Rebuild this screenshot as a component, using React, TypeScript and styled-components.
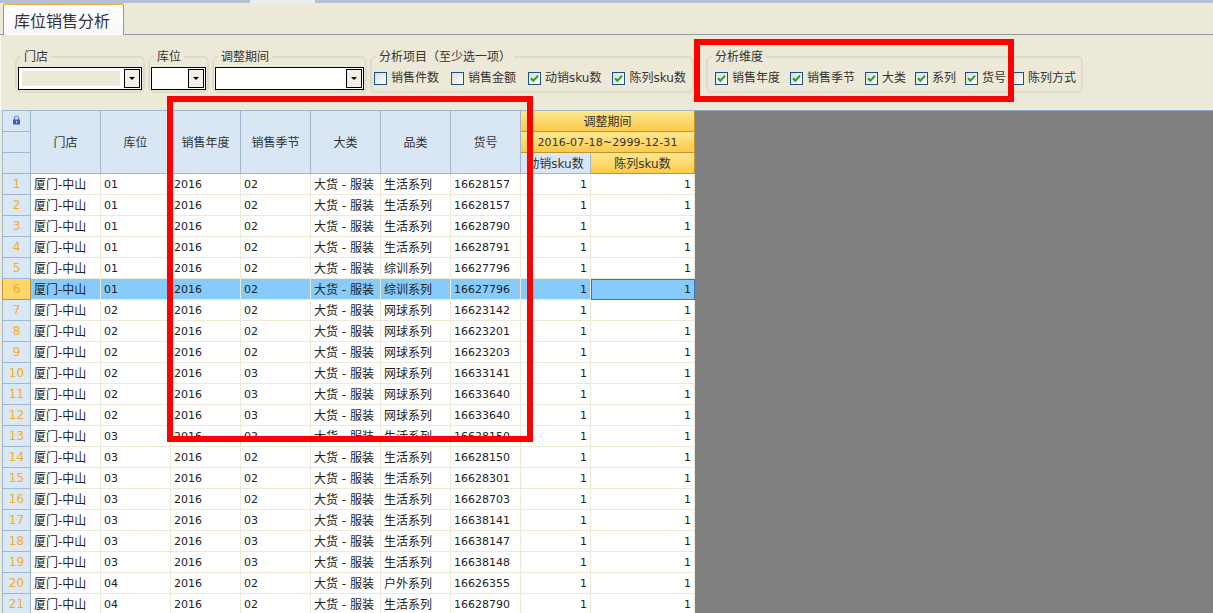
import { FC } from "react";
import styled, { createGlobalStyle } from "styled-components";

const GlobalStyle = createGlobalStyle`
  html, body {
    margin: 0;
    height: 100%;
    overflow: hidden;
    background: #ece9d8;
  }
  body {
    font-family: "DejaVu Sans", "Noto Sans CJK SC", sans-serif;
    font-size: 12px;
    color: #222;
  }
`;

const Page = styled.div`
  position: relative;
  width: 1213px;
  height: 613px;
  display: flex;
  flex-direction: column;
  overflow: hidden;
`;

const TopLine = styled.div`
  height: 3px;
  flex: none;
  background: linear-gradient(
    to right,
    #b4c0d4 250px,
    #e8eef0 250px,
    #e8eef0 315px,
    #b4c0d4 315px
  );
`;

const TabStrip = styled.div`
  height: 32px;
  flex: none;
  display: flex;
  align-items: flex-end;
  padding-left: 3px;
  border-bottom: 1px solid #919b9c;
  box-sizing: border-box;
`;

const Tab = styled.div`
  width: 121px;
  height: 32px;
  margin-bottom: -1px;
  box-sizing: border-box;
  display: flex;
  align-items: center;
  padding: 0 0 1px 10px;
  font-size: 16px;
  color: #333;
  background: linear-gradient(#ffffff, #f8f8fc);
  border: 1px solid #919b9c;
  border-bottom: none;
  border-top: 2px solid #f5b342;
  border-radius: 3px 3px 0 0;
`;

const Toolbar = styled.div`
  height: 75px;
  flex: none;
  box-sizing: border-box;
  display: flex;
  align-items: flex-start;
  gap: 3px;
  padding: 15px 0 0 14px;
  border-left: 1px solid #f8f8f4;
`;

const Group = styled.fieldset<{ $width: number; $shift?: number }>`
  width: ${(p) => p.$width}px;
  height: 43px;
  margin: 0 0 0 ${(p) => p.$shift ?? 0}px;
  min-width: 0;
  box-sizing: border-box;
  padding: 0;
  border: 2px solid #dddbc9;
  border-radius: 6px;
`;

const Legend = styled.legend`
  margin-left: 4px;
  padding: 0 3px;
  font-size: 12px;
  line-height: 14px;
  color: #333;
  text-spacing-trim: space-all;
`;

const Combo = styled.div`
  margin: 3px 1px 0;
  height: 23px;
  box-sizing: border-box;
  display: flex;
  justify-content: space-between;
  padding: 1px 1px 1px 3px;
  background: #fff;
  border: 1px solid #000;
`;

const ComboValue = styled.div<{ $fill?: boolean }>`
  flex: 1;
  margin: 2px 4px 2px 0;
  background: ${(p) => (p.$fill ? "#ece9d8" : "#fff")};
`;

const ComboButton = styled.div`
  width: 16px;
  flex: none;
  box-sizing: border-box;
  border: 1px solid #000;
  background: #f2f0e6;
  display: flex;
  align-items: center;
  justify-content: center;

  &::after {
    content: "";
    border-left: 3px solid transparent;
    border-right: 3px solid transparent;
    border-top: 3px solid #000;
  }
`;

const CheckRow = styled.div<{ $inset: number }>`
  display: flex;
  align-items: center;
  margin: 7px 0 0 ${(p) => p.$inset}px;
  height: 15px;
`;

const CheckItem = styled.div<{ $after: number }>`
  display: flex;
  align-items: center;
  gap: 4px;
  margin-right: ${(p) => p.$after}px;
  white-space: nowrap;
  line-height: 15px;
  color: #333;
`;

const Box = styled.span`
  width: 13px;
  height: 13px;
  flex: none;
  box-sizing: border-box;
  border: 1px solid #1c5180;
  background: linear-gradient(135deg, #dcdcd7, #ffffff);
  display: flex;
  align-items: center;
  justify-content: center;
`;

const GridArea = styled.div`
  flex: 1;
  display: flex;
  padding-left: 2px;
  min-height: 0;
  background: #ece9d8;
`;

const Table = styled.div`
  width: 693px;
  flex: none;
  display: flex;
  flex-direction: column;
`;

const Empty = styled.div`
  flex: 1;
  background: #808080;
  border-top: 1px solid #8fa8c8;
`;

const COLUMNS = "29px repeat(8, 70px) 104px";

const Header = styled.div`
  display: grid;
  grid-template-columns: ${COLUMNS};
  grid-template-rows: repeat(3, 21px);
  border-top: 1px solid #9eb6ce;
  flex: none;
`;

const HeadCell = styled.div<{ $col?: string; $row?: string; $warm?: boolean }>`
  grid-column: ${(p) => p.$col ?? "auto"};
  grid-row: ${(p) => p.$row ?? "auto"};
  box-sizing: border-box;
  display: flex;
  align-items: center;
  justify-content: center;
  padding-bottom: 2px;
  white-space: nowrap;
  overflow: hidden;
  color: #333;
  border-right: 1px solid ${(p) => (p.$warm ? "#c8922a" : "#9eb6ce")};
  border-bottom: 1px solid ${(p) => (p.$warm ? "#c8922a" : "#9eb6ce")};
  background: ${(p) =>
    p.$warm ? "linear-gradient(#fee88f, #fdc94c)" : "#d9e6f4"};
`;

const CornerCell = styled(HeadCell)`
  border-left: 1px solid #9eb6ce;
`;

const DateText = styled.span`
  font-size: 11px;
  letter-spacing: 0.15px;
  margin-top: 2px;
`;

const Row = styled.div`
  display: grid;
  grid-template-columns: ${COLUMNS};
  height: 21px;
  flex: none;
`;

const RowNumber = styled.div<{ $selected?: boolean }>`
  box-sizing: border-box;
  display: flex;
  align-items: center;
  justify-content: center;
  font-size: 12px;
  color: #f9ab22;
  background: ${(p) => (p.$selected ? "#fdd76b" : "#dae7f5")};
  border: 1px solid ${(p) => (p.$selected ? "#c8922a" : "#9eb6ce")};
  border-top: none;
`;

const Cell = styled.div<{ $selected?: boolean; $num?: boolean; $end?: boolean }>`
  box-sizing: border-box;
  display: flex;
  align-items: center;
  justify-content: ${(p) => (p.$end ? "flex-end" : "flex-start")};
  padding: 0 3px ${(p) => (p.$num ? 0 : 2)}px;
  white-space: nowrap;
  overflow: hidden;
  font-size: ${(p) => (p.$num ? "11px" : "12px")};
  color: #222;
  background: ${(p) => (p.$selected ? "#87cbfa" : "#fff")};
  border-right: 1px solid #efe9d8;
  border-bottom: 1px solid #efe9d8;
`;

const ActiveCell = styled(Cell)`
  border: 1px solid #3a70c0;
`;

const Highlight = styled.div<{ $x: number; $y: number; $w: number; $h: number }>`
  position: absolute;
  left: ${(p) => p.$x}px;
  top: ${(p) => p.$y}px;
  width: ${(p) => p.$w}px;
  height: ${(p) => p.$h}px;
  box-sizing: border-box;
  border: 6px solid #ff0000;
  pointer-events: none;
`;

const Check: FC<{ label: string; checked?: boolean; after: number }> = ({
  label,
  checked,
  after,
}) => (
  <CheckItem $after={after}>
    <Box>
      {checked && (
        <svg width="9" height="9" viewBox="0 0 9 9">
          <path d="M1 4.2 L3.4 6.8 L8 1.6" fill="none" stroke="#21a121" strokeWidth="2" />
        </svg>
      )}
    </Box>
    {label}
  </CheckItem>
);

const LockIcon = () => (
  <svg width="9" height="10" viewBox="0 0 9 10">
    <path d="M2.5 5V3a2 2 0 0 1 4 0v2" fill="none" stroke="#6f86c8" strokeWidth="1.2" />
    <rect x="1" y="4.5" width="7" height="5" fill="#3b5fc4" />
    <rect x="4" y="6" width="1" height="2" fill="#cfdcf5" />
  </svg>
);

const rows: [string, string, string, string][] = [
  ["01", "02", "生活系列", "16628157"],
  ["01", "02", "生活系列", "16628157"],
  ["01", "02", "生活系列", "16628790"],
  ["01", "02", "生活系列", "16628791"],
  ["01", "02", "综训系列", "16627796"],
  ["01", "02", "综训系列", "16627796"],
  ["02", "02", "网球系列", "16623142"],
  ["02", "02", "网球系列", "16623201"],
  ["02", "02", "网球系列", "16623203"],
  ["02", "03", "网球系列", "16633141"],
  ["02", "03", "网球系列", "16633640"],
  ["02", "03", "网球系列", "16633640"],
  ["03", "02", "生活系列", "16628150"],
  ["03", "02", "生活系列", "16628150"],
  ["03", "02", "生活系列", "16628301"],
  ["03", "02", "生活系列", "16628703"],
  ["03", "03", "生活系列", "16638141"],
  ["03", "03", "生活系列", "16638147"],
  ["03", "03", "生活系列", "16638148"],
  ["04", "02", "户外系列", "16626355"],
  ["04", "02", "生活系列", "16628790"],
];

const frozenHeads = ["门店", "库位", "销售年度", "销售季节", "大类", "品类", "货号"];

export default function App() {
  return (
    <Page>
      <GlobalStyle />
      <TopLine />
      <TabStrip>
        <Tab>库位销售分析</Tab>
      </TabStrip>

      <Toolbar>
        <Group $width={130}>
          <Legend>门店</Legend>
          <Combo>
            <ComboValue $fill />
            <ComboButton />
          </Combo>
        </Group>
        <Group $width={61}>
          <Legend>库位</Legend>
          <Combo>
            <ComboValue />
            <ComboButton />
          </Combo>
        </Group>
        <Group $width={155}>
          <Legend>调整期间</Legend>
          <Combo>
            <ComboValue />
            <ComboButton />
          </Combo>
        </Group>
        <Group $width={324}>
          <Legend>分析项目（至少选一项）</Legend>
          <CheckRow $inset={2}>
            <Check label="销售件数" after={12} />
            <Check label="销售金额" after={12} />
            <Check label="动销sku数" checked after={11} />
            <Check label="陈列sku数" checked after={0} />
          </CheckRow>
        </Group>
        <Group $width={377} $shift={9}>
          <Legend>分析维度</Legend>
          <CheckRow $inset={7}>
            <Check label="销售年度" checked after={10} />
            <Check label="销售季节" checked after={10} />
            <Check label="大类" checked after={9} />
            <Check label="系列" checked after={9} />
            <Check label="货号" checked after={5} />
            <Check label="陈列方式" after={0} />
          </CheckRow>
        </Group>
      </Toolbar>

      <GridArea>
        <Table>
          <Header>
            <CornerCell>
              <LockIcon />
            </CornerCell>
            {frozenHeads.map((head, i) => (
              <HeadCell key={head} $col={`${i + 2}`} $row="1 / span 3">
                {head}
              </HeadCell>
            ))}
            <HeadCell $col="9 / span 2" $row="1" $warm>
              调整期间
            </HeadCell>
            <CornerCell $col="1" $row="2" />
            <HeadCell $col="9 / span 2" $row="2" $warm>
              <DateText>2016-07-18~2999-12-31</DateText>
            </HeadCell>
            <CornerCell $col="1" $row="3" />
            <HeadCell $col="9" $row="3">
              动销sku数
            </HeadCell>
            <HeadCell $col="10" $row="3" $warm>
              陈列sku数
            </HeadCell>
          </Header>

          {rows.map(([bin, season, series, sku], i) => {
            const selected = i === 5;
            return (
              <Row key={i}>
                <RowNumber $selected={selected}>{i + 1}</RowNumber>
                <Cell $selected={selected}>厦门-中山</Cell>
                <Cell $selected={selected} $num>{bin}</Cell>
                <Cell $selected={selected} $num>2016</Cell>
                <Cell $selected={selected} $num>{season}</Cell>
                <Cell $selected={selected}>大货 - 服装</Cell>
                <Cell $selected={selected}>{series}</Cell>
                <Cell $selected={selected} $num>{sku}</Cell>
                <Cell $selected={selected} $num $end>1</Cell>
                {selected ? (
                  <ActiveCell $selected $num $end>1</ActiveCell>
                ) : (
                  <Cell $num $end>1</Cell>
                )}
              </Row>
            );
          })}
        </Table>
        <Empty />
      </GridArea>

      <Highlight $x={167} $y={96} $w={366} $h={346} />
      <Highlight $x={694} $y={39} $w={320} $h={63} />
    </Page>
  );
}
